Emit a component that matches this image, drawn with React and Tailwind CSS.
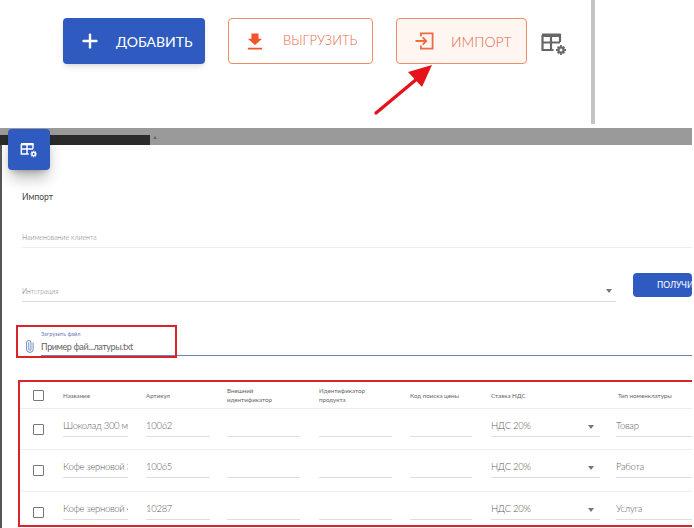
import React from "react";
import { Plus, Paperclip } from "lucide-react";

const font = { fontFamily: "Lato, 'Noto Sans', sans-serif" };

// table + gear icon, used on the toolbar and on the blue tile
const TableGear = ({ className }) => (
	<svg viewBox="0 0 26 24" className={className} fill="none">
		<path d="M1.5 3h17.5v7M1.5 3v15h11M1.5 10.5h17.5M10 3v15" stroke="currentColor" strokeWidth="2.2" />
		<rect x="1" y="1.5" width="18.5" height="3.5" fill="currentColor" />
		<circle cx="20" cy="18" r="2.6" stroke="currentColor" strokeWidth="2.2" />
		<path d="M20 13v1.8M20 21.2v1.8M15 18h1.8M23.2 18H25M16.6 14.6l1.2 1.2M22.2 20.2l1.2 1.2M23.4 14.6l-1.2 1.2M17.8 20.2l-1.2 1.2" stroke="currentColor" strokeWidth="1.8" />
	</svg>
);

const Caret = () => (
	<div className="w-0 h-0 border-x-[3.5px] border-x-transparent border-t-[4px] border-t-[#777]" />
);

const Toolbar = () => (
	<div className="relative h-[128px] bg-white">
		<div className="flex items-start h-[124px] w-[595px] border-r-[4px] border-[#c4c4c4] pl-[63px] pt-[18px]">
			<button className="flex items-center w-[142px] h-[46px] rounded bg-[#2f5bc0] text-white shadow-md pl-[16px]">
				<Plus size={22} strokeWidth={2.6} />
				<span className="ml-[15px] text-[14px]">ДОБАВИТЬ</span>
			</button>
			<button className="flex items-center w-[145px] h-[46px] ml-[23px] rounded border border-[#ee8d66] bg-white text-[#e8694a] pl-[18px]">
				<svg viewBox="0 0 18 20" className="w-[16px] h-[19px]">
					<path d="M5 1h8v6h4l-8 7-8-7h4z" fill="#f2552c" />
					<rect x="1" y="17" width="16" height="2" fill="#f2552c" />
				</svg>
				<span className="ml-[20px] text-[13px] font-light">ВЫГРУЗИТЬ</span>
			</button>
			<button className="flex items-center w-[131px] h-[46px] ml-[23px] rounded border border-[#ee8d66] bg-[#fff6f2] text-[#e0694c] pl-[17px]">
				<svg viewBox="0 0 22 20" className="w-[21px] h-[18px]" fill="none" stroke="#ee6a42" strokeWidth="2">
					<path d="M7 5V1.5h13v17H7V15M1 10h12M9 6l4 4-4 4" />
				</svg>
				<span className="ml-[16px] text-[14px] font-light">ИМПОРТ</span>
			</button>
			<TableGear className="w-[26px] h-[24px] ml-[14px] mt-[14px] text-[#666]" />
		</div>
		{/* red annotation arrow */}
		<svg viewBox="0 0 80 60" className="absolute left-[368px] top-[60px] w-[80px] h-[60px]">
			<path d="M8 53L50 18" stroke="#e5131a" strokeWidth="3.4" strokeLinecap="round" />
			<path d="M64 5L40 12L54 27z" fill="#e5131a" />
		</svg>
	</div>
);

const Header = ({ children, className = "" }) => (
	<div className={`text-[6.2px] leading-[9px] text-[#666] ${className}`}>{children}</div>
);

const Cell = ({ children, w, ml, select }) => (
	<div className={`flex items-center justify-between h-[25px] pt-[5px] border-b border-[#dedede] text-[9.5px] font-light tracking-[-0.3px] text-[#5c5c5c] overflow-hidden whitespace-nowrap shrink-0 ${w} ${ml}`}>
		<span>{children}</span>
		{select && <span className="mr-[6px]"><Caret /></span>}
	</div>
);

const Checkbox = () => <div className="w-[11px] h-[11px] border border-[#777] rounded-[1px] shrink-0" />;

const Row = ({ name, code, type, height, last }) => (
	<div className={`flex items-start pl-[13px] shrink-0 ${height} ${last ? "" : "border-b border-[#eeeeee]"}`}>
		<div className="mt-[15px]"><Checkbox /></div>
		<div className="flex pl-[19px] pt-[3px]">
			<Cell w="w-[65px]">{name}</Cell>
			<Cell w="w-[64px]" ml="ml-[18px]">{code}</Cell>
			<Cell w="w-[73px]" ml="ml-[17px]" />
			<Cell w="w-[73px]" ml="ml-[19px]" />
			<Cell w="w-[62px]" ml="ml-[18px]" />
			<Cell w="w-[109px]" ml="ml-[19px]" select>НДС 20%</Cell>
			<Cell w="w-[90px]" ml="ml-[16px]">{type}</Cell>
		</div>
	</div>
);

const ImportTable = () => (
	<div className="relative flex flex-col h-[147px] ml-[16px] mt-[24px] w-[674px] border-2 border-r-0 border-[#d9242b] overflow-hidden">
		<div className="flex items-center h-[27px] shrink-0 pl-[13px] border-b border-[#eeeeee]">
			<Checkbox />
			<div className="flex items-center ml-[19px]">
				<Header className="w-[83px]">Название</Header>
				<Header className="w-[81px]">Артикул</Header>
				<Header className="w-[92px]">Внешний<br />идентификатор</Header>
				<Header className="w-[91px]">Идентификатор<br />продукта</Header>
				<Header className="w-[81px]">Код поиска цены</Header>
				<Header className="w-[127px]">Ставка НДС</Header>
				<Header>Тип номенклатуры</Header>
			</div>
		</div>
		<Row name="Шоколад 300 мл" code="10062" type="Товар" height="h-[41px]" />
		<Row name="Кофе зерновой 3" code="10065" type="Работа" height="h-[42px]" />
		<Row name="Кофе зерновой 4" code="10287" type="Услуга" height="h-[34px]" last />
	</div>
);

const ImportForm = () => (
	<div className="relative w-[692px] h-[383px] bg-white border-l-2 border-[#555]">
		<div className="pl-[20px] pt-[46px]">
			<div className="text-[8.5px] leading-[12px] text-[#444]">Импорт</div>
			<div className="mt-[28px] h-[17px] border-b border-[#eeeeee] text-[7px] font-light leading-[12px] text-[#777]">Наименование клиента</div>
			<div className="flex items-start mt-[25px]">
				<div className="flex justify-between w-[594px] h-[29px] pt-[12px] border-b border-[#dddddd] text-[6.8px] font-light leading-[12px] text-[#777]">
					<span>Интеграция</span>
					<span className="mt-[4px] mr-[4px]"><Caret /></span>
				</div>
				<button className="ml-[17px] pl-[24px] w-[59px] h-[24px] rounded-sm bg-[#2f5bc0] text-white text-[8.5px] text-left whitespace-nowrap overflow-hidden">ПОЛУЧИТЬ</button>
			</div>
			<div className="flex items-end mt-[28px]">
				<Paperclip size={13} className="text-[#7d93c9] mb-[3px] ml-[1px] -rotate-45" />
				<div className="ml-[5px] w-[651px] h-[26px] border-b border-[#6f83b8]">
					<div className="text-[5.5px] leading-[9px] text-[#6677bb]">Загрузить файл</div>
					<div className="text-[9px] tracking-[-0.4px] leading-[14px] mt-[1px] text-[#666]">Пример фай...латуры.txt</div>
				</div>
			</div>
		</div>
		<ImportTable />
		{/* blue tile and the red frame lie over the form */}
		<div className="absolute left-[6px] top-[-16px] flex items-center justify-center w-[42px] h-[41px] rounded-sm bg-[#2f5bc0] shadow-lg shadow-black/30 text-white">
			<TableGear className="w-[18px] h-[16px]" />
		</div>
		<div className="absolute left-[14px] top-[180px] w-[161px] h-[33px] border-[2px] border-[#d9242b]" />
	</div>
);

export default function App() {
	return (
		<div className="w-[694px] h-[528px] overflow-hidden bg-white" style={font}>
			<Toolbar />
			<div className="flex items-end w-[692px] h-[17px] bg-[#9a9a9a]">
				<div className="w-[150px] h-[10px] bg-[#2b2b2b]" />
				<div className="ml-[3px] mb-[6px] w-0 h-0 border-x-[2px] border-x-transparent border-b-[3px] border-b-[#666]" />
			</div>
			<ImportForm />
		</div>
	);
}
